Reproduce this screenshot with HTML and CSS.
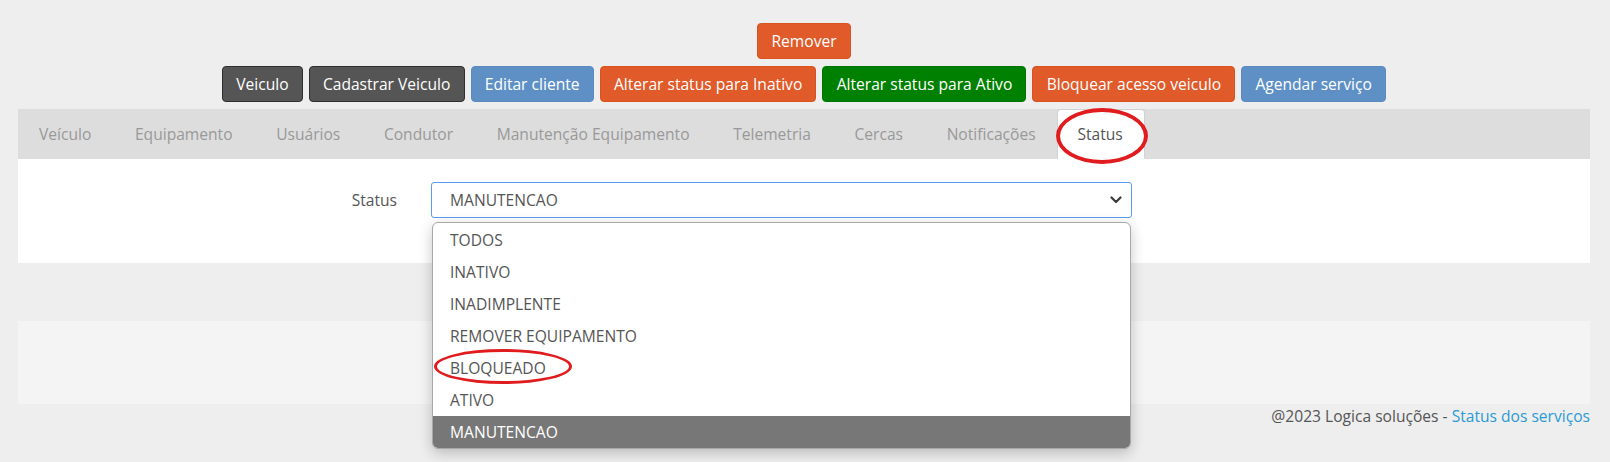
FILE: index.html
```html
<!DOCTYPE html>
<html lang="pt-BR">
<head>
<meta charset="utf-8">
<title>Status do veículo</title>
<link rel="stylesheet" href="styles.css">
</head>
<body>
<div class="page">
  <div class="actions">
    <div class="btn-row">
      <button class="btn btn-orange">Remover</button>
    </div>
    <div class="btn-row">
      <button class="btn btn-dark">Veiculo</button>
      <button class="btn btn-dark">Cadastrar Veiculo</button>
      <button class="btn btn-blue">Editar cliente</button>
      <button class="btn btn-orange">Alterar status para Inativo</button>
      <button class="btn btn-green">Alterar status para Ativo</button>
      <button class="btn btn-orange">Bloquear acesso veiculo</button>
      <button class="btn btn-blue">Agendar serviço</button>
    </div>
  </div>

  <ul class="tabs">
    <li class="tab">Veículo</li>
    <li class="tab">Equipamento</li>
    <li class="tab">Usuários</li>
    <li class="tab">Condutor</li>
    <li class="tab">Manutenção Equipamento</li>
    <li class="tab">Telemetria</li>
    <li class="tab">Cercas</li>
    <li class="tab">Notificações</li>
    <li class="tab tab-active">Status<span class="mark mark-tab"></span></li>
  </ul>

  <div class="panel">
    <div class="form-row">
      <label class="form-label">Status</label>
      <div class="select-wrap">
        <div class="select">
          <span>MANUTENCAO</span>
          <svg class="chevron" width="12" height="8" viewBox="0 0 12 8"><path d="M1.5 1.5 L6 6 L10.5 1.5" fill="none" stroke="#3a3a3a" stroke-width="2.2" stroke-linecap="round" stroke-linejoin="round"/></svg>
        </div>
        <ul class="dropdown">
          <li class="option">TODOS</li>
          <li class="option">INATIVO</li>
          <li class="option">INADIMPLENTE</li>
          <li class="option">REMOVER EQUIPAMENTO</li>
          <li class="option">BLOQUEADO<span class="mark mark-item"></span></li>
          <li class="option">ATIVO</li>
          <li class="option option-selected">MANUTENCAO</li>
        </ul>
      </div>
    </div>
  </div>

  <div class="panel2"></div>

  <footer class="footer">@2023 Logica soluções - <a class="footer-link" href="#">Status dos serviços</a></footer>
</div>
</body>
</html>
```

FILE: styles.css
```css
* { box-sizing: border-box; }

html, body {
  margin: 0;
  padding: 0;
}

body {
  background: #eeeeee;
  font-family: "Open Sans", "Noto Sans", "DejaVu Sans", sans-serif;
  font-size: 15.6px;
  color: #555555;
}

.page {
  padding: 23px 20px 36px 18px;
}

.actions {
  display: flex;
  flex-direction: column;
  gap: 7px;
}

.btn-row {
  display: flex;
  justify-content: center;
  gap: 6px;
}

.btn {
  height: 36px;
  padding: 0 13.2px;
  border: 1px solid transparent;
  border-radius: 4px;
  font-family: inherit;
  font-size: 15.6px;
  color: #ffffff;
  line-height: 34px;
  cursor: pointer;
}

.btn-orange { background: #e05a2a; border-color: #d9531f; }
.btn-dark { background: #555555; border-color: #2e2e2e; }
.btn-blue { background: #5e90c6; border-color: #5a8bc0; }
.btn-green { background: #008000; border-color: #007400; }

.tabs {
  list-style: none;
  margin: 7px 0 0;
  padding: 0;
  height: 50px;
  background: #dddddd;
  display: flex;
}

.tab {
  position: relative;
  display: flex;
  align-items: center;
  padding: 0 21.8px;
  color: #999999;
  border-radius: 4px 4px 0 0;
}

.tab:first-child {
  padding-left: 21px;
}

.tab-active {
  background: #ffffff;
  color: #555555;
  border: 1px solid #d2d2d2;
  border-bottom-color: transparent;
  padding: 0 21px 0 19px;
}

.mark {
  position: absolute;
  border: 4px solid #e11c1f;
  border-radius: 50%;
  pointer-events: none;
}

.mark-tab {
  left: -2px;
  top: -2px;
  width: 92px;
  height: 56px;
}

.mark-item {
  left: 1px;
  top: -3px;
  width: 138px;
  height: 35px;
  border-width: 3.5px;
}

.panel {
  background: #ffffff;
  height: 104px;
  padding-top: 23px;
}

.form-row {
  display: grid;
  grid-template-columns: 379px 701px;
  column-gap: 34px;
  align-items: center;
}

.form-label {
  text-align: right;
}

.select-wrap {
  position: relative;
}

.select {
  height: 36px;
  border: 1px solid #5b9cec;
  border-radius: 3px;
  background: #ffffff;
  display: flex;
  align-items: center;
  justify-content: space-between;
  padding: 0 9px 0 18px;
  color: #555555;
}

.chevron {
  display: block;
}

.dropdown {
  position: absolute;
  left: 1px;
  right: 1px;
  top: 40px;
  margin: 0;
  padding: 1px 0 0;
  list-style: none;
  background: #ffffff;
  border: 1px solid #a9a9a9;
  border-radius: 6px;
  box-shadow: 0 4px 14px rgba(0, 0, 0, 0.22);
  z-index: 5;
}

.option {
  position: relative;
  height: 32px;
  line-height: 32px;
  padding-left: 17px;
  color: #555555;
}

.option-selected {
  background: #777777;
  color: #ffffff;
  border-radius: 0 0 5px 5px;
}

.panel2 {
  margin-top: 58px;
  height: 83px;
  background: #f4f4f4;
}

.footer {
  text-align: right;
  line-height: 22px;
  padding-top: 1px;
  color: #555555;
}

.footer-link {
  color: #2b9ad6;
  text-decoration: none;
}
```
